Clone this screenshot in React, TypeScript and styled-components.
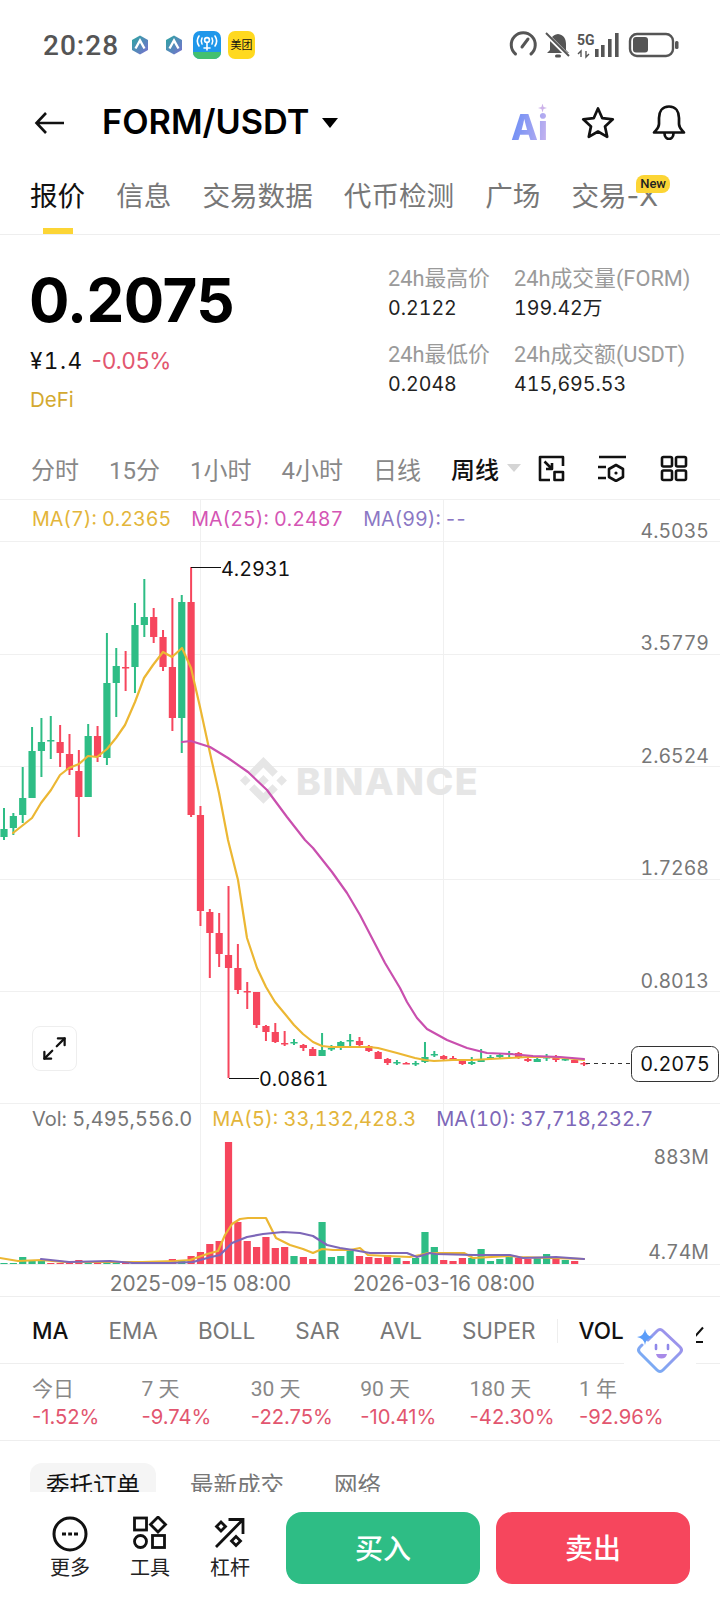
import { FC } from "react";
import styled, { createGlobalStyle } from "styled-components";
import { Maximize2 } from "lucide-react";

const UP = "#2ebd85";
const DOWN = "#f6465d";
const YELLOW = "#ecb733";
const MAGENTA = "#c94fae";
const PURPLE = "#7d67b8";
const GRID = "#f0f0f0";

const TABS = ["报价", "信息", "交易数据", "代币检测", "广场", "交易-X"];
const INTERVALS = ["分时", "15分", "1小时", "4小时", "日线"];
const INDICATORS = ["MA", "EMA", "BOLL", "SAR", "AVL", "SUPER"];
const PERF = [
  ["今日", "-1.52%"],
  ["7 天", "-9.74%"],
  ["30 天", "-22.75%"],
  ["90 天", "-10.41%"],
  ["180 天", "-42.30%"],
  ["1 年", "-92.96%"],
];
const GRID_Y = [541, 654, 766, 879, 991, 1103];
const AXIS = [
  ["4.5035", 530],
  ["3.5779", 642],
  ["2.6524", 755],
  ["1.7268", 867],
  ["0.8013", 980],
  ["883M", 1156],
  ["4.74M", 1251],
] as const;

// [up?, high, top of body, bottom of body, low], in page pixels
const CANDLES: [number, number, number, number, number][] = [
  [1, 808, 829, 837, 840], [1, 813, 816, 828, 835], [1, 767, 798, 815, 823], [1, 727, 751, 798, 798],
  [1, 718, 742, 751, 777], [1, 716, 740, 741, 759], [0, 725, 742, 753, 767], [0, 734, 754, 770, 775],
  [0, 750, 771, 797, 837], [1, 724, 736, 797, 797], [0, 726, 736, 757, 762], [1, 633, 683, 758, 765],
  [1, 648, 666, 683, 717], [0, 651, 667, 668, 691], [1, 603, 625, 667, 693], [1, 579, 617, 625, 637],
  [0, 608, 617, 637, 643], [0, 630, 637, 667, 671], [0, 598, 667, 718, 731], [1, 595, 602, 718, 753],
  [0, 567, 602, 815, 817], [0, 806, 815, 911, 926], [0, 909, 912, 933, 978], [0, 913, 933, 954, 967],
  [0, 886, 955, 968, 1078], [0, 944, 968, 990, 994], [0, 982, 991, 992, 1009], [0, 992, 992, 1025, 1028],
  [0, 1025, 1026, 1032, 1041], [0, 1023, 1032, 1042, 1043], [0, 1031, 1043, 1044, 1046], [1, 1039, 1042, 1043, 1045],
  [0, 1044, 1045, 1048, 1051], [0, 1047, 1049, 1056, 1056], [1, 1033, 1050, 1056, 1056], [1, 1045, 1048, 1049, 1051],
  [1, 1041, 1042, 1047, 1050], [1, 1034, 1040, 1041, 1046], [0, 1037, 1041, 1045, 1046], [0, 1045, 1046, 1051, 1052],
  [0, 1051, 1052, 1059, 1059], [0, 1058, 1059, 1063, 1065], [1, 1060, 1062, 1063, 1065], [0, 1062, 1063, 1064, 1064],
  [1, 1061, 1063, 1064, 1066], [1, 1042, 1057, 1062, 1063], [1, 1051, 1054, 1055, 1057], [0, 1055, 1056, 1059, 1060],
  [0, 1056, 1058, 1059, 1061], [0, 1059, 1060, 1064, 1065], [1, 1057, 1062, 1064, 1065], [1, 1049, 1059, 1062, 1062],
  [1, 1055, 1057, 1058, 1060], [1, 1054, 1055, 1057, 1058], [1, 1051, 1053, 1054, 1057], [0, 1052, 1053, 1057, 1059],
  [0, 1056, 1059, 1061, 1062], [1, 1057, 1059, 1062, 1062], [1, 1054, 1057, 1058, 1061], [0, 1055, 1057, 1060, 1062],
  [1, 1057, 1059, 1060, 1061], [0, 1059, 1060, 1063, 1063], [0, 1062, 1063, 1064, 1066],
];

// [up?, top of the bar]
const VOLUMES: [number, number][] = [
  [1, 1263], [1, 1263], [1, 1257], [1, 1261], [1, 1261], [0, 1263], [0, 1263], [0, 1263],
  [0, 1260], [1, 1262], [0, 1263], [1, 1263], [1, 1263], [0, 1263], [1, 1263], [1, 1263],
  [0, 1263], [0, 1263], [0, 1259], [1, 1260], [0, 1256], [0, 1252], [0, 1244], [0, 1241],
  [0, 1142], [0, 1222], [0, 1241], [0, 1247], [0, 1237], [0, 1248], [0, 1247], [1, 1256],
  [0, 1257], [0, 1259], [1, 1222], [1, 1257], [1, 1256], [1, 1251], [0, 1256], [0, 1257],
  [0, 1258], [0, 1255], [1, 1258], [0, 1261], [1, 1258], [1, 1232], [1, 1247], [0, 1260],
  [0, 1261], [0, 1258], [1, 1258], [1, 1249], [1, 1261], [1, 1259], [1, 1257], [0, 1258],
  [0, 1259], [1, 1258], [1, 1254], [0, 1258], [1, 1260], [0, 1261],
];

const MA7 =
  "13,833 32,818 41,803 51,790 60,775 69,768 79,764 88,756 97,757 107,749 116,738 125,725 135,702 144,678 153,665 163,652 172,657 182,648 191,668 200,707 210,753 219,793 228,840 238,880 247,938 257,968 266,987 275,1002 285,1014 294,1025 303,1034 313,1042 322,1046 331,1047 350,1047 369,1047 378,1048 397,1053 415,1058 425,1060 434,1061 453,1060 472,1060 490,1059 509,1058 528,1057 547,1057 565,1058 584,1060";
const MA25 =
  "182,742 191,741 210,747 228,758 248,772 267,790 287,817 305,840 313,848 332,872 347,893 360,915 373,940 385,963 400,988 407,1002 417,1018 427,1029 447,1040 467,1048 487,1053 510,1054 533,1056 560,1057 584,1059";
const VOL_MA5 =
  "0,1258 18,1261 41,1260 64,1262 142,1262 175,1261 190,1260 207,1254 218,1251 225,1235 232,1224 240,1219 248,1218 266,1218 276,1238 290,1245 303,1249 313,1253 322,1249 333,1250 350,1250 360,1248 368,1255 387,1256 410,1257 420,1255 428,1253 464,1253 473,1258 510,1256 519,1257 584,1259";
const VOL_MA10 =
  "41,1259 69,1262 110,1261 133,1263 170,1263 193,1262 211,1257 220,1255 232,1243 247,1237 263,1234 283,1232 300,1233 313,1236 327,1245 340,1248 353,1250 370,1253 390,1253 407,1253 417,1257 430,1253 436,1254 473,1255 510,1255 523,1258 556,1257 584,1259";

const barX = (i: number) => 4 + 9.355 * i;

const App: FC = () => (
  <Page>
    <GlobalStyle />
    <StatusBar>
      <Clock>20:28</Clock>
      <AppIcons>
        <HexIcon />
        <HexIcon />
        <SignalAppIcon />
        <MeituanIcon>美团</MeituanIcon>
      </AppIcons>
      <StatusIcons />
    </StatusBar>

    <NavBar>
      <BackIcon />
      <PairTitle>FORM/USDT</PairTitle>
      <Caret />
      <NavActions>
        <AiMark>
          Ai
          <AiSpark />
        </AiMark>
        <StarIcon />
        <BellIcon />
      </NavActions>
    </NavBar>

    <TabBar>
      {TABS.map((t, i) => (
        <Tab key={t} $active={i === 0}>
          {t}
          {t === "交易-X" && <NewBadge>New</NewBadge>}
        </Tab>
      ))}
    </TabBar>

    <Summary>
      <PriceColumn>
        <LastPrice>0.2075</LastPrice>
        <SubPrice>
          <FiatPrice>¥1.4</FiatPrice>
          <Change>-0.05%</Change>
        </SubPrice>
        <Category>DeFi</Category>
      </PriceColumn>
      <Stats>
        <Stat>
          <StatLabel>24h最高价</StatLabel>
          <StatValue>0.2122</StatValue>
        </Stat>
        <Stat>
          <StatLabel>24h成交量(FORM)</StatLabel>
          <StatValue>199.42万</StatValue>
        </Stat>
        <Stat>
          <StatLabel>24h最低价</StatLabel>
          <StatValue>0.2048</StatValue>
        </Stat>
        <Stat>
          <StatLabel>24h成交额(USDT)</StatLabel>
          <StatValue>415,695.53</StatValue>
        </Stat>
      </Stats>
    </Summary>

    <IntervalBar>
      {INTERVALS.map((t) => (
        <Interval key={t}>{t}</Interval>
      ))}
      <Interval $active>周线</Interval>
      <DownTriangle />
      <IntervalTools>
        <LayoutIcon />
        <SettingsIcon />
        <GridIcon />
      </IntervalTools>
    </IntervalBar>

    <Chart>
      <ChartSvg viewBox="0 500 720 796">
        {GRID_Y.map((y) => (
          <line key={y} x1="0" x2="720" y1={y + 0.5} y2={y + 0.5} stroke={GRID} />
        ))}
        <line x1="200.5" x2="200.5" y1="500" y2="1264" stroke={GRID} />
        <line x1="443.5" x2="443.5" y1="500" y2="1264" stroke={GRID} />
        <line x1="0" x2="720" y1="1264.5" y2="1264.5" stroke={GRID} />

        <g transform="translate(240 757) scale(0.37)" fill="#e6e6e6">
          <path d="M38.73 53.2l24.59-24.58 24.6 24.6 14.3-14.31L63.32 0 24.43 38.9l14.3 14.3zM0 63.31l14.3-14.31 14.31 14.31-14.31 14.3zM38.73 73.41l24.59 24.59 24.6-24.6 14.31 14.29-38.9 38.91-38.91-38.88-.02-.02zM98.33 63.31l14.3-14.31 14.31 14.3-14.31 14.32zM77.83 63.3L63.32 48.78 52.59 59.51l-1.24 1.23-2.54 2.54 14.51 14.5 14.51-14.47z" />
        </g>
        <Watermark x="296" y="795">BINANCE</Watermark>

        {CANDLES.map(([up, high, top, bottom, low], i) => {
          const color = up ? UP : DOWN;
          const x = barX(i);
          return (
            <g key={i} fill={color}>
              <rect x={x - 1} y={high} width="2" height={low - high} />
              <rect x={x - 3.6} y={top} width="7.2" height={Math.max(bottom - top, 1.5)} />
            </g>
          );
        })}
        <Line points={MA7} stroke={YELLOW} />
        <Line points={MA25} stroke={MAGENTA} />

        {VOLUMES.map(([up, top], i) => (
          <rect key={i} x={barX(i) - 3.6} y={top} width="7.2" height={1264 - top} fill={up ? UP : DOWN} />
        ))}
        <Line points={VOL_MA5} stroke={YELLOW} />
        <Line points={VOL_MA10} stroke={PURPLE} />

        <path d="M191 567.5H221M229 1078.5H259" stroke="#111" strokeWidth="1.2" fill="none" />
        <MarkText x="221" y="575.5">4.2931</MarkText>
        <MarkText x="259" y="1085.5">0.0861</MarkText>

        <line x1="586" x2="631" y1="1063.5" y2="1063.5" stroke="#333" strokeDasharray="4 4" />
        <rect x="631.5" y="1046.5" width="87" height="35" rx="7" fill="#fff" stroke="#333" />
        <MarkText x="675" y="1071" textAnchor="middle">0.2075</MarkText>

        {AXIS.map(([label, y]) => (
          <AxisText key={label} x="709" y={y + 7.5} textAnchor="end">
            {label}
          </AxisText>
        ))}
        <DateText x="200.5" y="1290.5" textAnchor="middle">2025-09-15 08:00</DateText>
        <DateText x="444" y="1290.5" textAnchor="middle">2026-03-16 08:00</DateText>
      </ChartSvg>

      <PriceLegend>
        <LegendItem $color="#e3b53a">MA(7): 0.2365</LegendItem>
        <LegendItem $color="#d455b4">MA(25): 0.2487</LegendItem>
        <LegendItem $color="#8b78c4">
          MA(99): <Dashes>--</Dashes>
        </LegendItem>
      </PriceLegend>
      <VolumeLegend>
        <LegendItem $color="#777">Vol: 5,495,556.0</LegendItem>
        <LegendItem $color="#e3b53a">MA(5): 33,132,428.3</LegendItem>
        <LegendItem $color="#7d67b8">MA(10): 37,718,232.7</LegendItem>
      </VolumeLegend>
      <ExpandButton>
        <Maximize2 size={27} strokeWidth={2} color="#111" />
      </ExpandButton>
    </Chart>

    <IndicatorBar>
      {INDICATORS.map((t, i) => (
        <Indicator key={t} $active={i === 0}>
          {t}
        </Indicator>
      ))}
      <IndicatorDivider />
      <Indicator $active>VOL</Indicator>
      <CutGlyph />
      <BotBadge>
        <BotIcon />
      </BotBadge>
    </IndicatorBar>

    <PerfRow>
      {PERF.map(([label, value]) => (
        <PerfCell key={label}>
          <PerfLabel>{label}</PerfLabel>
          <PerfValue>{value}</PerfValue>
        </PerfCell>
      ))}
    </PerfRow>

    <OrderTabs>
      <OrderTab $active>委托订单</OrderTab>
      <OrderTab>最新成交</OrderTab>
      <OrderTab>网络</OrderTab>
    </OrderTabs>

    <BottomBar>
      <Tool>
        <MoreIcon />
        <span>更多</span>
      </Tool>
      <Tool>
        <ToolsIcon />
        <span>工具</span>
      </Tool>
      <Tool>
        <LeverIcon />
        <span>杠杆</span>
      </Tool>
      <TradeButton $color={UP}>买入</TradeButton>
      <TradeButton $color={DOWN}>卖出</TradeButton>
    </BottomBar>
  </Page>
);

export default App;

/* icons */

const HexIcon: FC = () => (
  <svg width="18" height="20" viewBox="0 0 18 20">
    <defs>
      <linearGradient id="hexFill" x1="0" y1="0" x2="1" y2="1">
        <stop offset="0" stopColor="#2aa7a0" />
        <stop offset="1" stopColor="#7a6fd0" />
      </linearGradient>
    </defs>
    <path d="M9 0.5L17 5V15L9 19.5L1 15V5Z" fill="url(#hexFill)" />
    <path d="M4.5 13.5L9 5.5L13.5 13.5" fill="none" stroke="#fff" strokeWidth="2.4" />
  </svg>
);

const SignalAppIcon: FC = () => (
  <svg width="28" height="28" viewBox="0 0 28 28">
    <rect width="28" height="28" rx="7" fill="#1f97ea" />
    <path d="M0 21H28V21A7 7 0 0 1 21 28H7A7 7 0 0 1 0 21Z" fill="#43c06f" />
    <g fill="none" stroke="#fff" strokeWidth="1.6" strokeLinecap="round">
      <path d="M6 5C4 8 4 12 6 15M22 5C24 8 24 12 22 15M9 7C8 9 8 11 9 13M19 7C20 9 20 11 19 13" />
      <circle cx="14" cy="9" r="2.4" />
      <path d="M14 11.5V19M11 17H17" />
    </g>
  </svg>
);

const StatusIcons: FC = () => (
  <StatusSvg viewBox="505 28 175 32">
    <g fill="none" stroke="#555" strokeWidth="3" strokeLinecap="round">
      <path d="M515.5 53A12 12 0 1 1 531 53" />
      <path d="M522 46L528 38" />
    </g>
    <path d="M558 33C552 34 550 38 550 43V49L547 52H569L566 49V43C566 38 564 34 558 33Z" fill="#555" />
    <rect x="555" y="53.5" width="6" height="3" rx="1.5" fill="#555" />
    <path d="M546 33L569 56" stroke="#fff" strokeWidth="4" />
    <path d="M546 32L569 55" stroke="#555" strokeWidth="2" />
    <StatusText x="577" y="43.5">5G</StatusText>
    <path d="M578 53L581 50V56M586 50V56L589 53" fill="none" stroke="#555" strokeWidth="1.4" />
    <g fill="#555">
      <rect x="595" y="48" width="3.6" height="8" />
      <rect x="601" y="44" width="3.6" height="12" />
      <rect x="608" y="38" width="3.6" height="18" />
      <rect x="615" y="32" width="3.6" height="24" />
      <rect x="633" y="36" width="15" height="15.5" rx="3" />
      <rect x="675" y="40" width="3.5" height="8" rx="1.5" />
    </g>
    <rect x="630" y="33" width="43" height="22" rx="7" fill="none" stroke="#555" strokeWidth="2.4" />
  </StatusSvg>
);

const BackIcon: FC = () => (
  <NavBack width="32" height="24" viewBox="0 0 32 24" fill="none" stroke="#111" strokeWidth="2.6">
    <path d="M30 12H3M12 2L2.5 12L12 22" />
  </NavBack>
);

const StarIcon: FC = () => (
  <svg width="34" height="33" viewBox="0 0 34 33" fill="none" stroke="#111" strokeWidth="2.7" strokeLinejoin="round">
    <path d="M17 2.5L21.3 12.2L31.8 13.3L24 20.4L26.2 30.8L17 25.5L7.8 30.8L10 20.4L2.2 13.3L12.7 12.2Z" />
  </svg>
);

const BellIcon: FC = () => (
  <svg width="34" height="35" viewBox="0 0 34 35" fill="none" stroke="#111" strokeWidth="2.7" strokeLinejoin="round">
    <path d="M17 1.5C10 1.5 7 7 7 13V19C7 23 4 25 2 27.5H32C30 25 27 23 27 19V13C27 7 24 1.5 17 1.5Z" />
    <path d="M12.5 28C12.5 36 21.5 36 21.5 28" />
  </svg>
);

const LayoutIcon: FC = () => (
  <svg width="27" height="27" viewBox="0 0 27 27" fill="none" stroke="#111" strokeWidth="2.6" strokeLinejoin="round">
    <path d="M25 11V2H2V25H12" />
    <rect x="16.5" y="17" width="8.5" height="8" />
    <path d="M6.5 6.5L14 14M14 8V14H8" />
  </svg>
);

const SettingsIcon: FC = () => (
  <svg width="29" height="27" viewBox="0 0 29 27" fill="none" stroke="#111" strokeWidth="2.6" strokeLinejoin="round">
    <path d="M1 2H28M0 12H8M0 23H8" />
    <path d="M18 10L25 14V22L18 26L11 22V14Z" />
    <circle cx="18" cy="18" r="1.6" fill="#111" stroke="none" />
  </svg>
);

const GridIcon: FC = () => (
  <svg width="28" height="27" viewBox="0 0 28 27" fill="none" stroke="#111" strokeWidth="2.6">
    <rect x="2" y="2" width="10" height="9.5" rx="1.5" />
    <rect x="16" y="2" width="10" height="9.5" rx="1.5" />
    <rect x="2" y="15.5" width="10" height="9.5" rx="1.5" />
    <rect x="16" y="15.5" width="10" height="9.5" rx="1.5" />
  </svg>
);

const BotIcon: FC = () => (
  <svg width="50" height="50" viewBox="635 1325 50 50" fill="none">
    <defs>
      <linearGradient id="botLine" x1="0" y1="1" x2="1" y2="0">
        <stop offset="0" stopColor="#6fb4f7" />
        <stop offset="1" stopColor="#a88ae8" />
      </linearGradient>
    </defs>
    <path
      d="M648 1340L657 1331Q660 1328 663 1331L680 1347Q683 1350 680 1353L663 1370Q660 1373 657 1370L640 1353Q637 1350 640 1347L642 1345"
      stroke="url(#botLine)"
      strokeWidth="3"
      strokeLinecap="round"
    />
    <path d="M645 1329Q646 1336 653 1337Q646 1338 645 1345Q644 1338 637 1337Q644 1336 645 1329Z" fill="#5b9df9" />
    <path d="M656 1345V1349M668 1345V1349" stroke="#8f88ea" strokeWidth="2.6" strokeLinecap="round" />
    <path d="M656 1354H667Q666 1358.5 661.5 1358.5Q657 1358.5 656 1354Z" fill="#a88ae8" />
  </svg>
);

const MoreIcon: FC = () => (
  <svg width="36" height="36" viewBox="0 0 36 36" fill="none" stroke="#111" strokeWidth="3">
    <circle cx="18" cy="18" r="16" />
    <path d="M10 18H14M16.2 18H20M22 18H26" strokeWidth="3.2" />
  </svg>
);

const ToolsIcon: FC = () => (
  <svg width="36" height="36" viewBox="0 0 36 36" fill="none" stroke="#111" strokeWidth="2.8">
    <rect x="2.5" y="2" width="12" height="12" />
    <path d="M26 1L33.5 8.5L26 16L18.5 8.5Z" />
    <circle cx="8.5" cy="25.5" r="6" />
    <rect x="20.5" y="19.5" width="12" height="12" />
  </svg>
);

const LeverIcon: FC = () => (
  <svg width="34" height="36" viewBox="0 0 34 36" fill="none" stroke="#111" strokeWidth="2.8">
    <path d="M3 31L30 3.5M15.5 3.5H30V18" />
    <path d="M8 6L12.5 10.5L8 15L3.5 10.5Z" />
    <path d="M23 20.5L27.5 25L23 29.5L18.5 25Z" />
  </svg>
);

/* styles */

const GlobalStyle = createGlobalStyle`
  html, body {
    margin: 0;
    padding: 0;
    background: #fff;
  }
  * {
    box-sizing: border-box;
  }
`;

const Page = styled.div`
  width: 720px;
  height: 1604px;
  overflow: hidden;
  background: #fff;
  color: #111;
  font-family: Inter, "Noto Sans CJK SC", sans-serif;
`;

const StatusBar = styled.div`
  height: 90px;
  display: flex;
  align-items: center;
  padding-left: 43px;
`;

const Clock = styled.div`
  font-family: Roboto, sans-serif;
  font-size: 28px;
  font-weight: 500;
  letter-spacing: 1px;
  color: #555;
`;

const AppIcons = styled.div`
  display: flex;
  align-items: center;
  margin-left: 12px;
  gap: 7px;

  svg:nth-child(2) {
    margin-left: 9px;
  }
  svg:nth-child(3) {
    margin-left: 3px;
  }
`;

const MeituanIcon = styled.div`
  width: 27px;
  height: 28px;
  border-radius: 7px;
  background: #ffd91f;
  color: #111;
  font-size: 11px;
  line-height: 28px;
  text-align: center;
  white-space: nowrap;
`;

const StatusSvg = styled.svg`
  width: 175px;
  height: 32px;
  margin-left: auto;
  margin-right: 40px;
`;

const StatusText = styled.text`
  font-family: Roboto, sans-serif;
  font-size: 14px;
  font-weight: 700;
  fill: #555;
`;

const NavBar = styled.div`
  height: 65px;
  display: flex;
  align-items: center;
  padding-left: 34px;
`;

const NavBack = styled.svg`
  flex: none;
`;

const PairTitle = styled.div`
  margin: -2px 0 0 36px;
  font-size: 34.3px;
  font-weight: 600;
  color: #000;
`;

const Caret = styled.div`
  margin-left: 13px;
  width: 0;
  height: 0;
  border-left: 8.5px solid transparent;
  border-right: 8.5px solid transparent;
  border-top: 10px solid #000;
`;

const NavActions = styled.div`
  margin-left: auto;
  margin-right: 34px;
  display: flex;
  align-items: center;
  gap: 37px;
`;

const AiMark = styled.div`
  position: relative;
  width: 36px;
  margin: 8px -3px 0 0;
  font-size: 35px;
  font-weight: 800;
  line-height: 38px;
  background: linear-gradient(100deg, #6f8ff5 10%, #9da2f2 60%, #c8b4ee 100%);
  -webkit-background-clip: text;
  background-clip: text;
  color: transparent;
`;

const AiSpark = styled.span`
  position: absolute;
  right: 0;
  top: -4px;
  width: 9px;
  height: 9px;
  background: #cdb3ea;
  clip-path: polygon(50% 0, 62% 38%, 100% 50%, 62% 62%, 50% 100%, 38% 62%, 0 50%, 38% 38%);
`;

const TabBar = styled.div`
  height: 80px;
  display: flex;
  gap: 31px;
  padding-left: 30px;
  border-bottom: 1px solid #eee;
`;

const Tab = styled.div<{ $active?: boolean }>`
  position: relative;
  height: 80px;
  padding-top: 20.5px;
  font-size: 27.6px;
  line-height: 40px;
  white-space: nowrap;
  color: ${(p) => (p.$active ? "#111" : "#777")};

  &::after {
    content: "";
    display: ${(p) => (p.$active ? "block" : "none")};
    position: absolute;
    left: 13px;
    bottom: 1px;
    width: 30px;
    height: 6px;
    background: #fcd535;
  }
`;

const NewBadge = styled.span`
  position: absolute;
  right: -12px;
  top: 20px;
  width: 34px;
  height: 18px;
  border-radius: 8px 8px 8px 2px;
  background: #fcd535;
  color: #222;
  font-family: Roboto, sans-serif;
  font-size: 13px;
  font-weight: 500;
  line-height: 18px;
  text-align: center;
`;

const Summary = styled.div`
  height: 210px;
  display: flex;
  padding-left: 29px;
`;

const PriceColumn = styled.div`
  width: 359px;
  padding-top: 32px;
`;

const LastPrice = styled.div`
  font-size: 60px;
  font-weight: 700;
  line-height: 66px;
  letter-spacing: -0.6px;
  color: #000;
`;

const SubPrice = styled.div`
  margin: 13px 0 0 1px;
  display: flex;
  gap: 8px;
  font-size: 22.5px;
  line-height: 30px;
`;

const FiatPrice = styled.span`
  letter-spacing: 1.5px;
  font-variant-numeric: tabular-nums;
`;

const Change = styled.span`
  color: #e2566f;
`;

const Category = styled.div`
  margin: 9px 0 0 1px;
  font-size: 20.5px;
  line-height: 30px;
  color: #d3a92f;
`;

const Stats = styled.div`
  display: grid;
  grid-template-columns: 126px 1fr;
  grid-auto-rows: 75.5px;
  padding-top: 30px;
`;

const Stat = styled.div`
  display: flex;
  flex-direction: column;
  white-space: nowrap;
`;

const StatLabel = styled.div`
  font-family: Roboto, "Noto Sans CJK SC", sans-serif;
  font-size: 21.8px;
  line-height: 28px;
  color: #9a9a9a;
`;

const StatValue = styled.div`
  margin-top: 1px;
  font-size: 19.6px;
  font-variant-numeric: tabular-nums;
  line-height: 28px;
  color: #222;
`;

const IntervalBar = styled.div`
  height: 55px;
  display: flex;
  align-items: center;
  gap: 30px;
  padding: 0 32px 8px 31px;
  border-bottom: 1px solid #f0f0f0;
`;

const Interval = styled.div<{ $active?: boolean }>`
  font-family: Roboto, "Noto Sans CJK SC", sans-serif;
  font-size: 24px;
  font-weight: ${(p) => (p.$active ? 500 : 400)};
  white-space: nowrap;
  color: ${(p) => (p.$active ? "#111" : "#888")};
`;

const DownTriangle = styled.div`
  margin: 0 -20px 0 -22px;
  width: 0;
  height: 0;
  border-left: 7.5px solid transparent;
  border-right: 7.5px solid transparent;
  border-top: 8px solid #d5d5d5;
`;

const IntervalTools = styled.div`
  margin-left: auto;
  display: flex;
  align-items: center;
  gap: 33px;
`;

const Chart = styled.div`
  position: relative;
  height: 797px;
  border-bottom: 1px solid #eee;
`;

const ChartSvg = styled.svg`
  display: block;
  width: 720px;
  height: 796px;
`;

const Line = styled.polyline`
  fill: none;
  stroke-width: 2.2;
  stroke-linejoin: round;
  stroke-linecap: round;
`;

const Watermark = styled.text`
  font-family: Inter, sans-serif;
  font-size: 37.5px;
  font-weight: 800;
  letter-spacing: 1.5px;
  fill: #e6e6e6;
`;

const MarkText = styled.text`
  font-family: Inter, sans-serif;
  font-size: 19.8px;
  font-variant-numeric: tabular-nums;
  fill: #111;
`;

const AxisText = styled.text`
  font-family: Inter, sans-serif;
  font-size: 19.5px;
  font-variant-numeric: tabular-nums;
  fill: #777;
`;

const DateText = styled.text`
  font-family: Inter, sans-serif;
  font-size: 20.8px;
  fill: #777;
`;

const PriceLegend = styled.div`
  position: absolute;
  left: 32px;
  top: 4px;
  display: flex;
  gap: 20px;
  font-size: 19.7px;
  font-variant-numeric: tabular-nums;
`;

const VolumeLegend = styled.div`
  position: absolute;
  left: 32px;
  top: 604px;
  display: flex;
  gap: 20px;
  font-size: 20px;
  font-variant-numeric: tabular-nums;
`;

const LegendItem = styled.span<{ $color: string }>`
  line-height: 30px;
  white-space: nowrap;
  color: ${(p) => p.$color};
`;

const Dashes = styled.span`
  letter-spacing: 1.5px;
  font-variant-numeric: normal;
`;

const ExpandButton = styled.div`
  position: absolute;
  left: 32px;
  top: 526px;
  width: 45px;
  height: 45px;
  display: flex;
  align-items: center;
  justify-content: center;
  background: #fff;
  border: 1px solid #eee;
  border-radius: 8px;
`;

const IndicatorBar = styled.div`
  position: relative;
  height: 67px;
  display: flex;
  align-items: center;
  gap: 40px;
  padding-left: 32px;
  padding-top: 1px;
  border-bottom: 1px solid #eee;
`;

const Indicator = styled.div<{ $active?: boolean }>`
  font-size: 22.5px;
  font-weight: ${(p) => (p.$active ? 500 : 400)};
  color: ${(p) => (p.$active ? "#111" : "#777")};
`;

const IndicatorDivider = styled.div`
  width: 1px;
  height: 24px;
  margin: 0 -19px 0 -19px;
  background: #eee;
`;

const CutGlyph = styled.div`
  position: absolute;
  left: 695px;
  top: 31px;
  width: 8px;
  height: 15px;
  background: linear-gradient(#111, #111) left bottom / 8px 2px no-repeat;

  &::before {
    content: "";
    position: absolute;
    left: 3px;
    top: -2px;
    width: 2px;
    height: 12px;
    background: #111;
    transform: rotate(42deg);
  }
`;

const BotBadge = styled.div`
  position: absolute;
  left: 624px;
  top: 13px;
  width: 72px;
  height: 65px;
  z-index: 2;
  display: flex;
  align-items: flex-end;
  padding-left: 11px;
  background: #fff;
`;

const PerfRow = styled.div`
  height: 77px;
  display: grid;
  grid-template-columns: repeat(6, 109.4px);
  padding-left: 32px;
  border-bottom: 1px solid #eee;
`;

const PerfCell = styled.div`
  padding-top: 11px;
`;

const PerfLabel = styled.div`
  font-family: Roboto, "Noto Sans CJK SC", sans-serif;
  font-size: 21px;
  line-height: 28px;
  color: #888;
`;

const PerfValue = styled.div`
  font-size: 20.2px;
  line-height: 27px;
  color: #e2566f;
`;

const OrderTabs = styled.div`
  height: 51px;
  overflow: hidden;
  display: flex;
  align-items: flex-start;
  gap: 50px;
  padding: 22px 0 0 30px;
`;

const OrderTab = styled.div<{ $active?: boolean }>`
  height: 48px;
  padding: 5px ${(p) => (p.$active ? "16px" : "0")} 0;
  margin-right: ${(p) => (p.$active ? "-16px" : "0")};
  border-radius: 12px;
  background: ${(p) => (p.$active ? "#f5f5f5" : "transparent")};
  color: ${(p) => (p.$active ? "#111" : "#777")};
  font-size: 23.5px;
  line-height: 36px;
`;

const BottomBar = styled.div`
  height: 112px;
  display: flex;
  padding: 20px 30px 0 30px;
`;

const Tool = styled.div`
  width: 80px;
  display: flex;
  flex-direction: column;
  align-items: center;
  margin-top: 4px;
  font-size: 20px;
  line-height: 28px;
  gap: 2px;
  color: #222;

  &:nth-child(3) {
    margin-right: 16px;
  }
`;

const TradeButton = styled.div<{ $color: string }>`
  width: 194px;
  height: 72px;
  margin-left: ${(p) => (p.$color === UP ? "0" : "16px")};
  border-radius: 16px;
  background: ${(p) => p.$color};
  color: #fff;
  font-size: 28px;
  font-weight: 500;
  line-height: 74px;
  text-align: center;
`;
